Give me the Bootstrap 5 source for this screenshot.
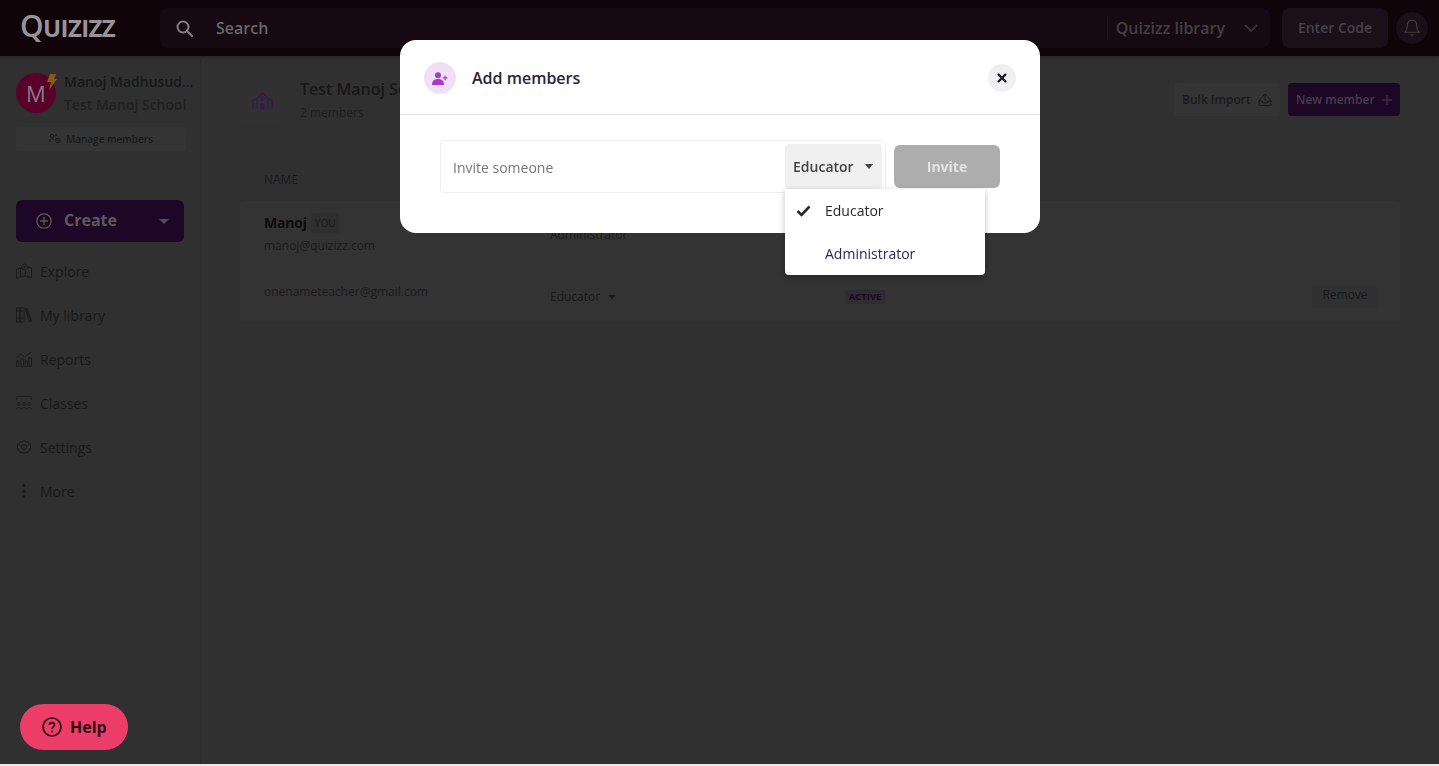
<!DOCTYPE html>
<html lang="en">
<head>
  <meta charset="UTF-8">
  <title>Quizizz - Add members</title>
  <meta name="viewport" content="width=device-width, initial-scale=1.0">
  <link href="https://cdn.jsdelivr.net/npm/bootstrap@5.3.0/dist/css/bootstrap.min.css" rel="stylesheet">
  <style>
    body { font-family: "Open Sans", "Noto Sans", sans-serif; background: #e9e9e9; overflow: hidden; }
    svg { display: block; flex: none; }
    .shell { height: 764px; background: #303030; overflow: hidden; }

    .topbar { height: 56px; flex: none; background: #100409; padding: 8px 11px 8px 20px; box-shadow: 0 1px 3px rgba(0,0,0,.3); }
    .logo-txt { width: 140px; font-size: 24px; font-weight: 700; line-height: 40px; letter-spacing: -.6px; color: #989497; }
    .logo-q { font-size: 30px; font-weight: 600; line-height: 30px; }
    .searchbox { height: 40px; background: #160912; border-radius: 8px; padding-left: 16px; }
    .search-word { margin-left: 23px; font-size: 16px; font-weight: 600; color: #6b6468; }
    .lib-pick { margin-left: auto; height: 24px; padding-left: 8px; border-left: 1px solid #1e121b; font-size: 16px; font-weight: 600; line-height: 24px; color: #443d42; }
    .lib-pick svg { margin: 0 12px 0 19px; }
    .code-btn { height: 40px; width: 106px; margin-left: 12px; padding: 0 0 2px; background: #1b0f18; border: 0; border-radius: 8px; font-size: 14px; font-weight: 600; color: #47404a; }
    .bell-btn { width: 32px; height: 32px; margin-left: 8px; background: #1b0f18; border-radius: 50%; }

    .side { width: 201px; flex: none; border-right: 1px solid #2b2b2b; padding: 17px 16px 0; }
    .avatar { width: 40px; height: 40px; flex: none; border-radius: 50%; background: #58002a; color: #8b7a83; font-size: 22px; line-height: 41px; text-align: center; }
    .bolt { position: absolute; top: 1px; right: -1px; }
    .who { min-width: 0; margin: -1px 0 0 8px; }
    .who-name { font-size: 14px; font-weight: 600; line-height: 20px; color: #181818; white-space: nowrap; }
    .who-school { margin-top: 3px; font-size: 14px; font-weight: 600; line-height: 20px; color: #202020; white-space: nowrap; }
    .manage-btn { width: 170px; height: 24px; margin-top: 12px; background: #343434; border-radius: 2px; font-size: 10px; font-weight: 600; color: #1a1a1a; }
    .create-btn { width: 168px; height: 42px; margin-top: 49px; padding: 0 15px 0 20px; background: #1c0826; border-radius: 6px; font-size: 16px; font-weight: 700; color: #5f5660; }
    .create-word { margin-left: 12px; padding-bottom: 2px; }
    .tri { width: 0; height: 0; border-left: 5px solid transparent; border-right: 5px solid transparent; border-top: 5px solid #554c57; }
    .tri-small { margin-left: 5px; vertical-align: 2px; border-left: 4px solid transparent; border-right: 4px solid transparent; border-top: 4px solid #1a1a1a; }
    .side-nav { margin-top: 7px; }
    .side-link { height: 44px; gap: 8px; font-size: 14px; color: #181818; }

    .main-pane { padding: 23px 39px 0; min-width: 0; }
    .school-box { width: 44px; height: 44px; background: #313131; border-radius: 4px; }
    .school-name { font-size: 16px; font-weight: 600; line-height: 20px; color: #181818; }
    .school-count { margin-top: 4px; font-size: 12px; line-height: 20px; color: #1e1e1e; }
    .ghost-btn { width: 106px; height: 33px; padding: 0 8px; background: #343434; border-radius: 4px; font-size: 12px; font-weight: 600; color: #1a1a1a; }
    .new-btn { width: 112px; height: 33px; margin-left: 8px; padding: 0 8px; background: #1c0826; border-radius: 4px; font-size: 12px; font-weight: 600; color: #453c4b; }
    .name-head { margin: 44px 0 0 24px; height: 25px; font-size: 12px; line-height: 26px; color: #1a1a1a; }
    .people { height: 120px; margin-top: 9px; background: #333; border-radius: 4px; padding: 11px 22px 0 24px; }
    .person { display: grid; grid-template-columns: 286px 295px 1fr auto; }
    .pname { font-size: 14px; font-weight: 700; line-height: 22px; letter-spacing: -.2px; color: #0c0c0c; }
    .you-chip { margin-left: 4px; padding: 0 4px; height: 20px; background: #2f2f2f; border-radius: 2px; font-size: 10px; line-height: 20px; color: #191919; }
    .pmail { margin-top: 2px; font-size: 12px; line-height: 20px; color: #1c1c1c; }
    .prole { font-size: 12px; color: #1a1a1a; }
    .role-one { padding-top: 14px; }
    .row-two { height: 24px; margin-top: 26px; }
    .row-two .pmail { margin: 0 0 10px; }
    .state-chip { width: 40px; height: 14px; background: #2e2c31; border-radius: 2px; font-size: 9.5px; font-weight: 700; line-height: 14px; text-align: center; color: #1c0826; }
    .remove-chip { width: 66px; height: 22px; border-radius: 4px; background: #313131; font-size: 12px; line-height: 18px; text-align: center; color: #181818; }

    .help-btn { position: fixed; left: 20px; top: 704px; width: 108px; height: 46px; background: #ec3e68; border-radius: 23px; z-index: 10; padding-left: 22px; gap: 8px; font-size: 16px; font-weight: 700; color: #300814; }

    .add-box { position: fixed; left: 400px; top: 40px; width: 640px; height: 193px; background: #fff; border: 0; border-radius: 16px; z-index: 20; }
    .add-box .modal-header { height: 75px; padding: 2px 24px 0; border-bottom: 1px solid #e5e5e5; }
    .head-circle { width: 32px; height: 32px; background: #f0dff6; border-radius: 50%; }
    .add-title { margin-left: 16px; font-size: 16px; font-weight: 600; color: #2a2438; }
    .x-btn { width: 28px; height: 28px; margin-left: auto; background: #f0f0f0; border-radius: 50%; }
    .add-box .modal-body { padding: 25px 40px 0; }
    .invite-field { width: 446px; height: 53px; border: 1px solid #efefef; border-radius: 4px; padding: 3px 3px 3px 12px; }
    .invite-word { font-size: 14px; color: #777480; padding-top: 2px; }
    .role-pick { width: 97px; height: 45px; margin-left: auto; padding: 0 8px; background: #f0f0f0; border-radius: 4px; font-size: 14px; font-weight: 600; color: #424242; }
    .role-tri { margin-right: 1px; border-left: 4.5px solid transparent; border-right: 4.5px solid transparent; border-top: 5px solid #424242; }
    .invite-btn { width: 106px; height: 43px; margin: 5px 0 0 8px; background: #adadad; border: 0; border-radius: 6px; font-size: 14px; font-weight: 700; color: #e3e3e3; }
    .role-menu { position: absolute; left: 385px; top: 149px; width: 200px; padding: 0; background: #fff; border-radius: 0 0 4px 4px; box-shadow: 0 2px 6px rgba(0,0,0,.25); z-index: 30; }
    .role-item { height: 43px; padding-left: 11px; font-size: 14px; color: #2a2438; }
    .role-item svg { margin-right: 14px; }
    .role-item.other { padding-left: 40px; color: #33205e; }
  </style>
</head>
<body>
  <div class="shell d-flex flex-column">
    <nav class="topbar d-flex align-items-center">
      <div class="logo-txt"><span class="logo-q">Q</span>UIZIZZ</div>
      <div class="searchbox flex-grow-1 d-flex align-items-center">
        <svg width="17" height="17" viewBox="0 0 17 17" fill="none" stroke="#85807f" stroke-width="2"><circle cx="7" cy="7" r="5.5"/><path d="M11 11l5 5" stroke-linecap="round"/></svg>
        <span class="search-word">Search</span>
        <div class="lib-pick d-flex align-items-center">Quizizz library
          <svg width="14" height="8" viewBox="0 0 14 8" fill="none" stroke="#383136" stroke-width="1.8"><path d="M1 1l6 6 6-6"/></svg>
        </div>
      </div>
      <button class="code-btn">Enter Code</button>
      <div class="bell-btn d-flex align-items-center justify-content-center">
        <svg width="16" height="18" viewBox="0 0 16 18" fill="none" stroke="#443d42" stroke-width="1.1"><path d="M8 1.2C5 1.2 3.4 3.6 3.4 6.4c0 3.6-.9 5-2.400 6.800h14c-1.500-1.800-2.400-3.200-2.400-6.800C12.600 3.600 11 1.200 8 1.200z"/><path d="M6.400 15.400c.8 1 2.400 1 3.200 0"/></svg>
      </div>
    </nav>

    <div class="d-flex flex-grow-1">
      <aside class="side">
        <div class="d-flex">
          <div class="avatar position-relative">M
            <svg class="bolt" width="11" height="16" viewBox="0 0 11 16" fill="#8a5a10"><path d="M4 0h6L8 5h3L3 16l2-8H1z"/></svg>
          </div>
          <div class="who">
            <div class="who-name">Manoj Madhusud...</div>
            <div class="who-school">Test Manoj School</div>
          </div>
        </div>
        <div class="manage-btn d-flex align-items-center justify-content-center gap-1">
          <svg width="13" height="12" viewBox="0 0 13 12" fill="none" stroke="#1a1a1a" stroke-width=".9"><circle cx="3" cy="3" r="1.7"/><path d="M.5 9c0-2.200 1-3 2.500-3h2"/><circle cx="9" cy="7.500" r="2.300"/><circle cx="9" cy="7.500" r=".7"/><path d="M6 2h2M6 4h1"/></svg>
          Manage members
        </div>
        <div class="create-btn d-flex align-items-center">
          <svg width="16" height="16" viewBox="0 0 16 16" fill="none" stroke="#5f5660" stroke-width="1.3"><circle cx="8" cy="8" r="7.2"/><path d="M8 4v8M4 8h8"/></svg>
          <span class="flex-grow-1 create-word">Create</span>
          <span class="tri"></span>
        </div>
        <div class="side-nav d-flex flex-column">
          <div class="side-link d-flex align-items-center">
            <svg width="16" height="16" viewBox="0 0 16 16" fill="none" stroke="#1a1a1a" stroke-width=".9"><path d="M.5 6.500l4-1.500v9l-4 1.500zM4.500 14l5-1 6 2V5l-3.500-1M9.500 8v5M4.500 5l1.500.5"/><circle cx="8.500" cy="4" r="3"/><circle cx="8.500" cy="3.800" r=".8"/></svg>
            Explore
          </div>
          <div class="side-link d-flex align-items-center">
            <svg width="16" height="16" viewBox="0 0 16 16" fill="none" stroke="#1a1a1a" stroke-width=".9"><rect x=".5" y="1" width="3.500" height="14"/><rect x="4" y="1" width="4" height="14"/><path d="M.5 4h7.500M.5 11h7.500M9.500 1.500l5.500 13"/><path d="M9 2l2-.5 4.500 12.500-2 1z"/></svg>
            My library
          </div>
          <div class="side-link d-flex align-items-center">
            <svg width="16" height="16" viewBox="0 0 16 16" fill="none" stroke="#1a1a1a" stroke-width=".9"><rect x=".5" y="10" width="2.500" height="5.500"/><rect x="5" y="8" width="2.500" height="7.500"/><rect x="9" y="10" width="2.500" height="5.500"/><rect x="13" y="7" width="2.500" height="8.500"/><path d="M.5 7l4-4 4 3 7-5"/></svg>
            Reports
          </div>
          <div class="side-link d-flex align-items-center">
            <svg width="16" height="16" viewBox="0 0 17 16" fill="none" stroke="#1a1a1a" stroke-width=".9"><path d="M1 5V1h15v4"/><circle cx="3" cy="9" r="1.4"/><circle cx="8.500" cy="9" r="1.4"/><circle cx="14" cy="9" r="1.4"/><path d="M.5 15c0-3 5-3 5 0M6 15c0-3 5-3 5 0M11.500 15c0-3 5-3 5 0"/></svg>
            Classes
          </div>
          <div class="side-link d-flex align-items-center">
            <svg width="16" height="16" viewBox="0 0 16 16" fill="none" stroke="#1a1a1a" stroke-width=".9"><path d="M8 1l1.500 1.800 2.300-.3.800 2.200 2.200.9-.5 2.400.5 2.400-2.200.9-.8 2.200-2.300-.3L8 15l-1.500-1.800-2.300.3-.8-2.200-2.200-.9.500-2.400-.5-2.400 2.200-.9.800-2.200 2.300.3z"/><circle cx="8" cy="8" r="2.500"/></svg>
            Settings
          </div>
          <div class="side-link d-flex align-items-center">
            <svg width="16" height="16" viewBox="0 0 16 16" fill="#1a1a1a"><circle cx="8" cy="2.500" r="1.7"/><circle cx="8" cy="8" r="1.7"/><circle cx="8" cy="13.500" r="1.7"/></svg>
            More
          </div>
        </div>
      </aside>

      <main class="main-pane flex-grow-1">
        <div class="d-flex align-items-start">
          <div class="school-box d-flex align-items-center justify-content-center">
            <svg width="21" height="18" viewBox="0 0 21 18" fill="none" stroke="#36175a" stroke-width="1.3"><path d="M5 17V6.500L10.500 1 16 6.500V17"/><path d="M1 17V8l4-1M20 17V8l-4-1"/><circle cx="10.500" cy="6.500" r="1.500"/><rect x="9" y="12" width="3" height="5" fill="#36175a"/></svg>
          </div>
          <div class="ms-3">
            <div class="school-name">Test Manoj School</div>
            <div class="school-count">2 members</div>
          </div>
          <div class="ms-auto d-flex pt-1">
            <div class="ghost-btn d-flex align-items-center justify-content-between">Bulk Import
              <svg width="14" height="13" viewBox="0 0 14 13" fill="none" stroke="#1a1a1a" stroke-width="1"><path d="M1 8h3l1 2h4l1-2h3v4.500H1zM1 8l2-3h1M13 8l-2-3h-1M7 8V1M4.500 3.500L7 1l2.500 2.500"/></svg>
            </div>
            <div class="new-btn d-flex align-items-center justify-content-between">New member
              <svg width="10" height="10" viewBox="0 0 10 10" stroke="#453c4b" stroke-width="1"><path d="M5 0v10M0 5h10"/></svg>
            </div>
          </div>
        </div>
        <div class="name-head">NAME</div>
        <div class="people">
          <div class="person">
            <div>
              <div class="d-flex align-items-center"><span class="pname">Manoj</span><span class="you-chip">YOU</span></div>
              <div class="pmail">manoj@quizizz.com</div>
            </div>
            <div class="prole role-one">Administrator</div>
          </div>
          <div class="person align-items-center row-two">
            <div class="pmail">onenameteacher@gmail.com</div>
            <div class="prole">Educator <span class="tri-small d-inline-block"></span></div>
            <div><div class="state-chip">ACTIVE</div></div>
            <div class="remove-chip">Remove</div>
          </div>
        </div>
      </main>
    </div>
  </div>

  <div class="help-btn d-flex align-items-center">
    <svg width="20" height="20" viewBox="0 0 20 20" fill="none" stroke="#300814" stroke-width="1.7"><circle cx="10" cy="10" r="9"/><path d="M7.500 8c0-3.200 5-3.200 5 0 0 1.800-2.500 1.800-2.500 4" stroke-width="1.6"/><circle cx="10" cy="14.500" r="1" fill="#300814" stroke="none"/></svg>
    Help
  </div>

  <div class="modal-content add-box">
    <div class="modal-header">
      <div class="head-circle d-flex align-items-center justify-content-center">
        <svg width="16" height="13" viewBox="0 0 16 13" fill="#a73cc4"><circle cx="6" cy="3.200" r="3"/><path d="M0 13c0-4 2-6 6-6s6 2 6 6z"/><path d="M12.500 3.500h1.200v1.800h1.800v1.200h-1.800v1.800h-1.200V6.500h-1.800V5.300h1.800z"/></svg>
      </div>
      <div class="add-title">Add members</div>
      <div class="x-btn d-flex align-items-center justify-content-center">
        <svg width="10" height="10" viewBox="0 0 10 10" stroke="#1f1a2b" stroke-width="2.4"><path d="M1 1l8 8M9 1l-8 8"/></svg>
      </div>
    </div>
    <div class="modal-body d-flex align-items-start">
      <div class="invite-field d-flex align-items-center">
        <span class="invite-word">Invite someone</span>
        <div class="role-pick d-flex align-items-center justify-content-between">Educator <span class="role-tri"></span></div>
      </div>
      <button class="invite-btn">Invite</button>
    </div>
    <div class="role-menu">
      <div class="role-item d-flex align-items-center">
        <svg width="15" height="12" viewBox="0 0 15 12" fill="none" stroke="#2a2438" stroke-width="2.6"><path d="M1.500 6l4 4 8-8.500"/></svg>
        Educator
      </div>
      <div class="role-item other d-flex align-items-center">Administrator</div>
    </div>
  </div>
</body>
</html>
